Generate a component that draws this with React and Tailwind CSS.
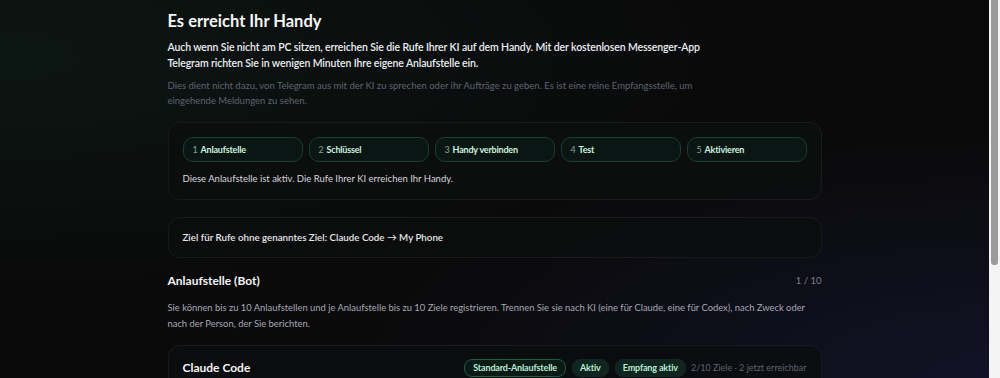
const steps = [
  { n: 1, label: 'Anlaufstelle' },
  { n: 2, label: 'Schlüssel' },
  { n: 3, label: 'Handy verbinden' },
  { n: 4, label: 'Test' },
  { n: 5, label: 'Aktivieren' },
];

function StepPill({ n, label }) {
  return (
    <div className="flex h-[25px] w-[120px] items-center gap-[3px] rounded-[10px] border border-[#173f32] bg-[#0a1613] px-[9px] text-[9px] font-bold tracking-[-0.2px]">
      <span className="font-normal text-[#87a497]">{n}</span>
      <span className="text-[#cdf3df]">{label}</span>
    </div>
  );
}

function Badge({ outlined, children }) {
  return (
    <span
      className={
        outlined
          ? 'flex h-[18px] items-center rounded-[8px] border border-[#1f5a45] bg-[#0a1a15] px-[8px] text-[#bdebd5]'
          : 'flex h-[18px] items-center rounded-[8px] border border-[#10281f] bg-[#0f2620] px-[7px] text-[#bdebd5]'
      }
    >
      {children}
    </span>
  );
}

export default function App() {
  return (
    <div className="flex h-screen overflow-hidden font-['Lato',sans-serif]">
      <main className="flex-1 overflow-hidden bg-[#0a0a0b] bg-[radial-gradient(ellipse_at_0%_15%,#0c1613_0%,transparent_50%),radial-gradient(ellipse_at_100%_100%,#121226_0%,transparent_45%)]">
        <div className="mx-auto w-[654px] pb-[160px] pt-[8px]">
          {/* Kopf */}
          <h1 className="text-[16.5px] font-bold leading-[26px] text-[#f5f6f7]">Es erreicht Ihr Handy</h1>
          <p className="mt-[5px] whitespace-nowrap text-[10.5px] font-semibold leading-[16px] tracking-[-0.12px] text-[#eceef1]">
            Auch wenn Sie nicht am PC sitzen, erreichen Sie die Rufe Ihrer KI auf dem Handy. Mit der kostenlosen Messenger-App
            <br />
            Telegram richten Sie in wenigen Minuten Ihre eigene Anlaufstelle ein.
          </p>
          <p className="mt-[7px] whitespace-nowrap text-[9.5px] leading-[15px] text-[#5d6472]">
            Dies dient nicht dazu, von Telegram aus mit der KI zu sprechen oder ihr Aufträge zu geben. Es ist eine reine Empfangsstelle, um
            <br />
            eingehende Meldungen zu sehen.
          </p>

          {/* Schritte */}
          <div className="mt-[14px] rounded-[12px] border border-[#181b1d] bg-[#0c0e0e]/80 px-[14px] pb-[12px] pt-[14px]">
            <div className="flex gap-[6px]">
              {steps.map((s) => (
                <StepPill key={s.n} {...s} />
              ))}
            </div>
            <p className="mt-[9px] text-[9.5px] leading-[16px] text-[#d4d7dc]">
              Diese Anlaufstelle ist aktiv. Die Rufe Ihrer KI erreichen Ihr Handy.
            </p>
          </div>

          <div className="mt-[17px] flex h-[41px] items-center rounded-[12px] border border-[#181b1d] bg-[#0b0c0d]/80 px-[14px] text-[9.75px] font-semibold text-[#e5e7eb]">
            Ziel für Rufe ohne genanntes Ziel: Claude Code → My Phone
          </div>

          {/* Bots */}
          <div className="mt-[14px] flex h-[18px] items-center justify-between">
            <h2 className="text-[12px] font-bold text-[#f3f4f6]">Anlaufstelle (Bot)</h2>
            <span className="text-[9.5px] text-[#7b818b]">1 / 10</span>
          </div>
          <p className="mt-[10px] whitespace-nowrap text-[9.4px] leading-[16px] text-[#a3a9b3]">
            Sie können bis zu 10 Anlaufstellen und je Anlaufstelle bis zu 10 Ziele registrieren. Trennen Sie sie nach KI (eine für Claude, eine für Codex), nach Zweck oder
            <br />
            nach der Person, der Sie berichten.
          </p>

          <div className="mt-[13px] rounded-[12px] border border-[#181b1d] bg-[#0b0c0e]/80 px-[14px] pb-[20px] pt-[13px]">
            <div className="flex h-[18px] items-center justify-between">
              <h3 className="text-[12px] font-bold text-[#f3f4f6]">Claude Code</h3>
              <div className="flex items-center gap-[6px] text-[9px] font-bold tracking-[-0.15px]">
                <Badge outlined>Standard-Anlaufstelle</Badge>
                <Badge>Aktiv</Badge>
                <Badge>Empfang aktiv</Badge>
                <span className="ml-[-1px] text-[9px] font-normal tracking-normal text-[#5d6472]">2/10 Ziele · 2 jetzt erreichbar</span>
              </div>
            </div>
            <div className="mt-[16px] flex flex-col gap-[8px]">
              <div className="flex h-[36px] items-center justify-between rounded-[10px] border border-[#181b1d] px-[12px] text-[10px] text-[#d4d7dc]">
                <span>My Phone</span>
                <span className="text-[#7b818b]">erreichbar</span>
              </div>
              <div className="flex h-[36px] items-center justify-between rounded-[10px] border border-[#181b1d] px-[12px] text-[10px] text-[#d4d7dc]">
                <span>Tablet</span>
                <span className="text-[#7b818b]">erreichbar</span>
              </div>
            </div>
          </div>
        </div>
      </main>

      {/* Scrollleiste */}
      <aside className="w-[11px] shrink-0 bg-[#f4f4f4] px-[2px]">
        <div className="h-[265px] rounded-b-[3px] bg-[#9b9b9b]" />
      </aside>
    </div>
  );
}
